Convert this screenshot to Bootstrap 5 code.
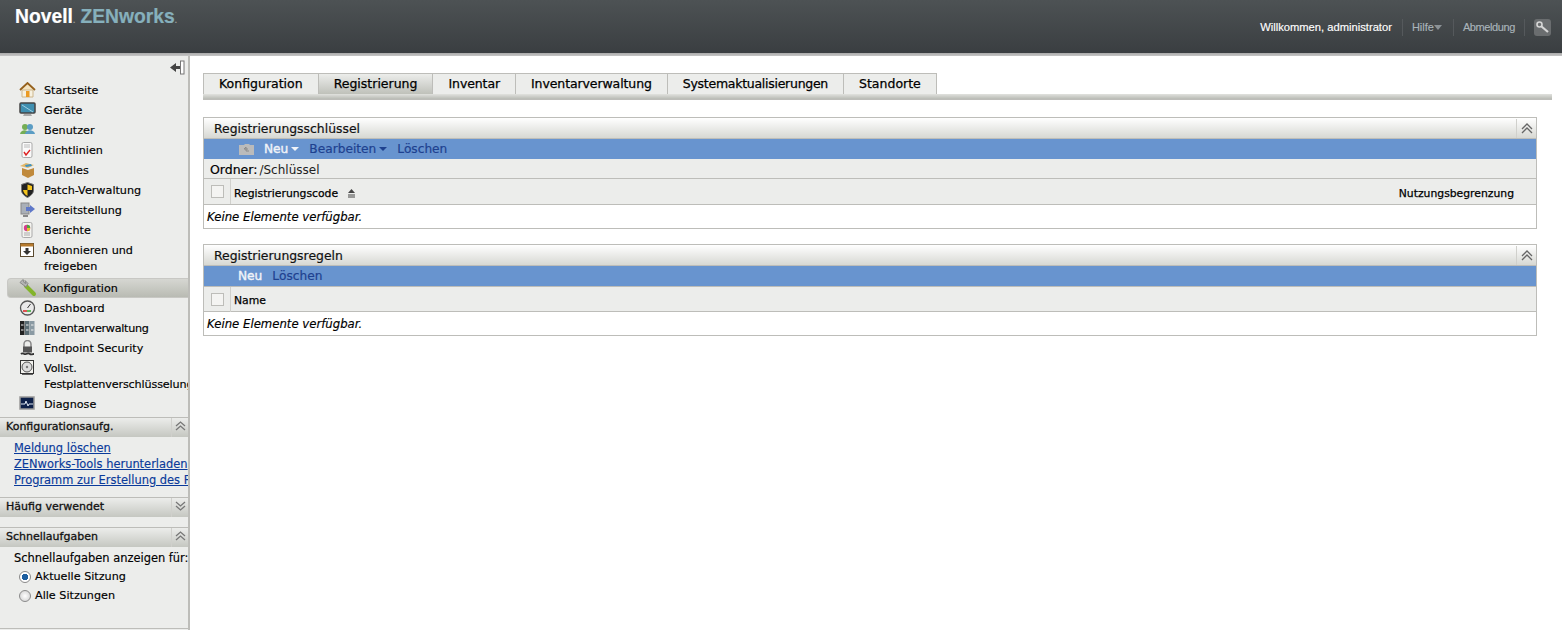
<!DOCTYPE html>
<html lang="de"><head><meta charset="utf-8"><title>ZENworks</title>
<link href="https://cdn.jsdelivr.net/npm/bootstrap@5.3.0/dist/css/bootstrap.min.css" rel="stylesheet">
<style>
html,body{height:630px;overflow:hidden}
body{font-family:"DejaVu Sans",sans-serif;font-size:11.2px;color:#000;background:#fff;line-height:16px;-webkit-text-stroke:.15px}
.topbar{height:53px;background:linear-gradient(#4d5254,#3a3e41);color:#fff;position:relative}
.topshadow{height:3px;background:linear-gradient(#aaa,#c6c6c6)}
.brand{font-family:"Liberation Sans",sans-serif;font-weight:700;font-size:19.3px;line-height:22px;padding:6px 0 0 15px;-webkit-text-stroke:.2px}
.brand em{font-style:normal;color:#86b0bc}
.brand i{font-style:normal;font-size:8px;color:#9a9a9a}
.toptools{height:53px;padding:1px 11px 0 0;font-family:"Liberation Sans",sans-serif;font-size:11px}
.toptools span.lnk{color:#a9b4ba;padding:0 9px;border-left:1px solid #55595c;line-height:17px}
.toptools .lnk.hlp{padding-right:11px}
.toptools .lnk.abm{letter-spacing:-.4px}
.toptools .welcome{color:#fff;padding-right:10px;font-size:11.2px}
.keybtn{width:17px;height:17px;background:#6a6d6f;border-radius:3px}
.shell{height:574px}
.leftcol{width:190px;flex:none;background:#ecedeb;border-right:2px solid #bdbdb9;overflow:hidden;display:flex;flex-direction:column}
.collapsebar{height:25px;flex:none;padding:4px 3px 0 0}
.menu-row{display:flex;flex:none;min-height:20px;padding:2px 0 2px 44px;position:relative;white-space:nowrap}
.menu-row svg{position:absolute;left:19px;top:1px}
.menu-row.two{height:36px}
.menu-row.sel{height:20px;margin:1px 0 1px 7px;padding:1px 0 0 35px;background:linear-gradient(#d6d7d2,#b9bbb3);border:1px solid #c8c8c4;border-right:0;border-radius:4px 0 0 4px;line-height:17px}
.menu-row.sel svg{left:10px;top:0}
.tight{letter-spacing:-.28px}
.tighter{letter-spacing:-.14px}
.sidehead{height:20px;flex:none;background:linear-gradient(#ecedeb,#c5c7c1);border-top:1px solid #bdbdb9;font-size:11px;padding:0 0 0 6px;display:flex;justify-content:space-between;line-height:17px;color:#111;-webkit-text-stroke:.3px}
.sidehead b{font-weight:normal;width:17px;border-left:1px solid #d0d0cc;display:flex;justify-content:center;padding-top:3px;-webkit-text-stroke:0}
.sidebody{padding:3px 0 0 14px;white-space:nowrap;overflow:hidden;flex:none;font-size:11.45px}
.sidebody.qt{padding-top:3px;height:20px}
.sidebody a{display:block;color:#0a3a9a;text-decoration:underline;height:16px}
.radrow{display:flex;align-items:center;gap:4px;height:19px;padding-left:3px}
.radbox{width:12px;height:12px;border-radius:50%;border:1px solid #8a8a8a;background:radial-gradient(#fff,#ccc);display:block;flex:none}
.radbox.on{background:radial-gradient(#1c5ea0 0 3px,#fff 3.5px)}
.sidefoot{margin-top:auto;height:2px;flex:none;border-top:1px solid #bdbdb9}
.workarea{padding:17px 10px 0 13px;flex:1;min-width:0}
.tabstrip{height:21px;display:flex}
.tabitem{height:21px;padding:0 15px;background:#ecedeb;border:1px solid #bdbdb9;border-right:0;border-bottom:0;line-height:20px;font-size:12.5px;color:#000;-webkit-text-stroke:.25px}
.tabitem:last-child{border-right:1px solid #bdbdb9}
.tabitem.act{background:linear-gradient(#ecedeb,#bfc1ba)}
.tabitem.narrowed{letter-spacing:-.27px}
.tabitem.narrow2{letter-spacing:-.1px}
.tabfoot{height:6px;background:linear-gradient(#e1e2de,#b9bbb5);margin-bottom:17px;border-bottom:1px solid #bdbdb9}
.panelbox{width:1334px;border:1px solid #bdbdb9;margin-bottom:15px}
.panelhead{height:21px;background:linear-gradient(#fff,#d7d8d3);border-bottom:1px solid #bdbdb9;padding:1px 0 0 10px;display:flex;justify-content:space-between;line-height:19px;font-size:12.4px;color:#111;-webkit-text-stroke:.2px}
.panelhead b{width:20px;border-left:1px solid #d0d0cc;display:flex;justify-content:center;padding-top:4px;-webkit-text-stroke:0}
.bluebar{height:20px;background:#6894cf;line-height:21px;font-size:12.2px;color:#1e418f;gap:10px;-webkit-text-stroke:.2px}
.bluebar .wh{color:#f0f3f8;-webkit-text-stroke:.4px}
.bluebar .car{display:inline-block;border:4px solid transparent;border-top-color:currentColor;border-bottom:0;vertical-align:2px;margin-left:3px}
.folderrow{height:20px;background:#ecedeb;border-bottom:1px solid #bdbdb9;padding-left:6px;line-height:21px;font-size:12.5px;-webkit-text-stroke:.2px}
.folderrow span{font-size:12px;margin-left:2px;color:#222;-webkit-text-stroke:0}
.thead-row{height:26px;background:#ecedeb;border-bottom:1px solid #bdbdb9;font-size:10.8px;padding-top:4px;-webkit-text-stroke:.25px}
.chkcell{width:27px;height:25px;margin-top:-4px;border-right:1px solid #d0d0cc;flex:none;display:flex;align-items:center;justify-content:center}
.chkbox{width:13px;height:13px;background:#f4f4f2;border:1px solid #bdbdb9;display:block}
.colname{padding-left:3px}
.sortmark{margin-left:5px}
.emptyrow{height:23px;padding-left:3px;padding-top:1px;font-style:italic;line-height:23px;font-size:11.7px}
</style></head><body>
<header class="topbar d-flex justify-content-between">
  <div class="brand">Novell<i>.</i> <em>ZENworks<i>.</i></em></div>
  <div class="toptools d-flex align-items-center">
    <span class="welcome">Willkommen, administrator</span>
    <span class="lnk hlp">Hilfe<svg width="8" height="5" viewBox="0 0 8 5"><path d="M0 0h8L4 5z" fill="#8b9296"/></svg></span>
    <span class="lnk abm">Abmeldung</span>
    <span class="lnk" style="padding-right:0;width:10px;height:17px"></span>
    <span class="keybtn d-flex align-items-center justify-content-center"><svg width="13" height="13" viewBox="0 0 13 13"><circle cx="3.500" cy="3.500" r="2.500" fill="none" stroke="#d6d6d6" stroke-width="1.600"/><path d="M5 5l7 6" stroke="#d6d6d6" stroke-width="2.200"/></svg></span>
  </div>
</header>
<div class="topshadow"></div>
<div class="d-flex shell">
<aside class="leftcol">
  <div class="collapsebar d-flex justify-content-end"><svg width="15" height="15" viewBox="0 0 15 15"><path d="M0 7.500L6 3v3h4v3H6v3z" fill="#444"/><rect x="10.500" y="1" width="3.500" height="13" fill="#fff" stroke="#777"/></svg></div>
  <div class="menu-row"><svg width="17" height="16" viewBox="0 0 17 16"><path d="M1 8l7.500-7 7.500 7" fill="#f3e3c0" stroke="#95601c" stroke-width="1.800"/><path d="M3 8h11v7H3z" fill="#f7f1e0" stroke="#cdb68c"/><rect x="7" y="9" width="3.500" height="6" fill="#eb9a22"/></svg>Startseite</div>
  <div class="menu-row"><svg width="17" height="16" viewBox="0 0 17 16"><rect x="1" y="1" width="15" height="10" rx="1" fill="#3f8fb0" stroke="#444" stroke-width="1.500"/><path d="M3 3l11 7" stroke="#9fd0e3"/><path d="M5 12h7l1 2H4z" fill="#aaa"/></svg>Geräte</div>
  <div class="menu-row"><svg width="17" height="16" viewBox="0 0 17 16"><circle cx="6" cy="5" r="3" fill="#75ae55"/><path d="M1 12c1-5 8-5 9 0z" fill="#75ae55"/><circle cx="11" cy="5" r="3" fill="#5b9dc4"/><path d="M6 12c1-5 9-5 10 0z" fill="#5b9dc4"/></svg>Benutzer</div>
  <div class="menu-row"><svg width="17" height="16" viewBox="0 0 17 16"><rect x="3" y="0.500" width="10" height="15" rx="1.500" fill="#fafafa" stroke="#aaa"/><path d="M5 3h6M5 5h6" stroke="#bbb"/><path d="M5 10l2 3 4-5" fill="none" stroke="#d22" stroke-width="1.400"/></svg>Richtlinien</div>
  <div class="menu-row"><svg width="17" height="16" viewBox="0 0 17 16"><path d="M3 6l6 2v8l-6-3zM9 8l6-2v7l-6 3z" fill="#c08a3c"/><path d="M1 4l6-3 8 2-6 3z" fill="#e3b768"/><path d="M6 3l6-1 1 2-6 1z" fill="#3d93c4"/></svg>Bundles</div>
  <div class="menu-row"><svg width="17" height="16" viewBox="0 0 17 16"><path d="M8.500.500l6 2v6c0 3-3 5.500-6 7-3-1.500-6-4-6-7v-6z" fill="#222" stroke="#777"/><path d="M8.500 2.500v5.500h4.500v-4zM8.500 8v6c-2-1-4-3-4.500-6z" fill="#f3c31c"/></svg>Patch-Verwaltung</div>
  <div class="menu-row"><svg width="17" height="16" viewBox="0 0 17 16"><rect x="2" y="1" width="8" height="11" fill="#aab0b8" stroke="#888"/><path d="M4 14h5" stroke="#888" stroke-width="2"/><path d="M7 5h4V3l5 4-5 4V9H7z" fill="#5f78c8"/></svg>Bereitstellung</div>
  <div class="menu-row"><svg width="17" height="16" viewBox="0 0 17 16"><rect x="3" y="0.500" width="10" height="15" rx="1.500" fill="#f4f4f0" stroke="#aaa"/><circle cx="8" cy="6" r="3.200" fill="#d43f8d"/><path d="M8 6V2.800A3.200 3.200 0 0 1 11.200 6z" fill="#4ca83c"/><path d="M8 6h3.200A3.200 3.200 0 0 1 8 9.200z" fill="#e8c030"/><path d="M5 11h6M5 13h6" stroke="#aaa"/></svg>Berichte</div>
  <div class="menu-row two"><svg width="17" height="16" viewBox="0 0 17 16"><rect x="1.500" y="1.500" width="13" height="13" fill="#fff" stroke="#5a4a30"/><rect x="1.500" y="1.500" width="13" height="3" fill="#b57a2e"/><path d="M6.500 6h3v3H12l-4 4-4-4h2.500z" fill="#333"/></svg><span>Abonnieren und<br>freigeben</span></div>
  <div class="menu-row sel"><svg width="20" height="18" viewBox="0 0 20 18"><path d="M8 7l8 8" stroke="#83b42b" stroke-width="4" stroke-linecap="round"/><path d="M8 8L2 3.500 5 .5l1 3 2 1-1-3 3 3z" fill="#b5b5b5" stroke="#888"/></svg>Konfiguration</div>
  <div class="menu-row"><svg width="17" height="16" viewBox="0 0 17 16"><circle cx="8.500" cy="8" r="7" fill="#e9e9e9" stroke="#555" stroke-width="1.300"/><path d="M8.500 8l3-4" stroke="#333"/><path d="M4 11h4" stroke="#d22" stroke-width="1.500"/><path d="M8 11h4" stroke="#3a3" stroke-width="1.500"/></svg>Dashboard</div>
  <div class="menu-row"><svg width="17" height="16" viewBox="0 0 17 16"><rect x="1" y="1" width="4.500" height="14" fill="#222"/><rect x="6" y="1" width="4.500" height="14" fill="#5b6d74"/><rect x="11" y="1" width="4.500" height="14" fill="#8a9aa3"/><path d="M2 5h2.500M2 10h2.500M7 5h2.500M7 10h2.500M12 5h2.500M12 10h2.500" stroke="#eee"/></svg><span class="tight">Inventarverwaltung</span></div>
  <div class="menu-row"><svg width="17" height="16" viewBox="0 0 17 16"><path d="M5 7V4a3.500 3.500 0 0 1 7 0v3" fill="none" stroke="#888" stroke-width="1.500"/><rect x="4" y="6.500" width="9" height="6" fill="#555"/><path d="M2 14c2-2 3 1 5 0s3-1 4 0 3 0 4 0" fill="none" stroke="#333" stroke-width="1.800"/></svg>Endpoint Security</div>
  <div class="menu-row two"><svg width="17" height="16" viewBox="0 0 17 16"><rect x="1.500" y="0.500" width="13" height="13" fill="#f2f2ee" stroke="#333"/><circle cx="8" cy="7" r="5" fill="#ddd" stroke="#555"/><circle cx="8" cy="7" r="1.200" fill="#777"/><path d="M3 14h11" stroke="#333" stroke-width="1.500"/></svg><span class="tighter">Vollst.<br>Festplattenverschlüsselung</span></div>
  <div class="menu-row" style="margin-bottom:2px"><svg width="17" height="16" viewBox="0 0 17 16"><rect x="1" y="1" width="14" height="12" fill="#0d2048" stroke="#999" stroke-width="1.500"/><path d="M2 8h4l1-3 2 5 1-2h4" fill="none" stroke="#dfe7f2"/></svg>Diagnose</div>
  <div class="sidehead"><span>Konfigurationsaufg.</span><b><svg width="11" height="10" viewBox="0 0 11 10"><path d="M1 5l4.500-4L10 5M1 9l4.500-4L10 9" fill="none" stroke="#777" stroke-width="1.300"/></svg></b></div>
  <div class="sidebody" style="height:60px"><a href="#">Meldung löschen</a><a href="#">ZENworks-Tools herunterladen</a><a href="#">Programm zur Erstellung des Pakets</a></div>
  <div class="sidehead"><span>Häufig verwendet</span><b><svg width="11" height="10" viewBox="0 0 11 10"><path d="M1 1l4.500 4L10 1M1 5l4.500 4L10 5" fill="none" stroke="#777" stroke-width="1.300"/></svg></b></div>
  <div style="height:10px;flex:none"></div>
  <div class="sidehead"><span>Schnellaufgaben</span><b><svg width="11" height="10" viewBox="0 0 11 10"><path d="M1 5l4.500-4L10 5M1 9l4.500-4L10 9" fill="none" stroke="#777" stroke-width="1.300"/></svg></b></div>
  <div class="sidebody qt">Schnellaufgaben anzeigen für:</div>
  <div class="ps-3"><div class="radrow"><span class="radbox on"></span>Aktuelle Sitzung</div><div class="radrow"><span class="radbox"></span>Alle Sitzungen</div></div>
  <div class="sidefoot"></div>
</aside>
<main class="workarea">
  <nav class="tabstrip"><div class="tabitem">Konfiguration</div><div class="tabitem act">Registrierung</div><div class="tabitem narrow2">Inventar</div><div class="tabitem narrow2">Inventarverwaltung</div><div class="tabitem narrowed">Systemaktualisierungen</div><div class="tabitem">Standorte</div></nav>
  <div class="tabfoot"></div>
  <section class="panelbox">
    <div class="panelhead"><span>Registrierungsschlüssel</span><b><svg width="12" height="11" viewBox="0 0 12 11"><path d="M1 6l5-5 5 5M1 10l5-5 5 5" fill="none" stroke="#666" stroke-width="1.300"/></svg></b></div>
    <div class="bluebar d-flex" style="padding-left:35px"><svg style="margin-top:4px" width="15" height="12" viewBox="0 0 15 12"><path d="M0 2h5l1-1h4l1 1h4v10H0z" fill="#bbb"/><path d="M7 4L5 6h4M7 4v4h3" fill="none" stroke="#8a8a8a"/></svg><span class="wh">Neu<i class="car"></i></span><span>Bearbeiten<i class="car"></i></span><span>Löschen</span></div>
    <div class="folderrow">Ordner:<span>/Schlüssel</span></div>
    <div class="thead-row d-flex align-items-center"><div class="chkcell"><i class="chkbox"></i></div><div class="colname flex-grow-1">Registrierungscode <svg class="sortmark" width="9" height="9" viewBox="0 0 9 9"><path d="M4.500 0L8 4H1z" fill="#444"/><path d="M1 6h7M1 8h7" stroke="#444"/></svg></div><div style="padding-right:22px">Nutzungsbegrenzung</div></div>
    <div class="emptyrow">Keine Elemente verfügbar.</div>
  </section>
  <section class="panelbox">
    <div class="panelhead"><span>Registrierungsregeln</span><b><svg width="12" height="11" viewBox="0 0 12 11"><path d="M1 6l5-5 5 5M1 10l5-5 5 5" fill="none" stroke="#666" stroke-width="1.300"/></svg></b></div>
    <div class="bluebar d-flex" style="padding-left:34px"><span class="wh">Neu</span><span>Löschen</span></div>
    <div class="thead-row d-flex align-items-center" style="border-top:1px solid #bdbdb9"><div class="chkcell"><i class="chkbox"></i></div><div class="colname">Name</div></div>
    <div class="emptyrow">Keine Elemente verfügbar.</div>
  </section>
</main>
</div>
</body></html>
